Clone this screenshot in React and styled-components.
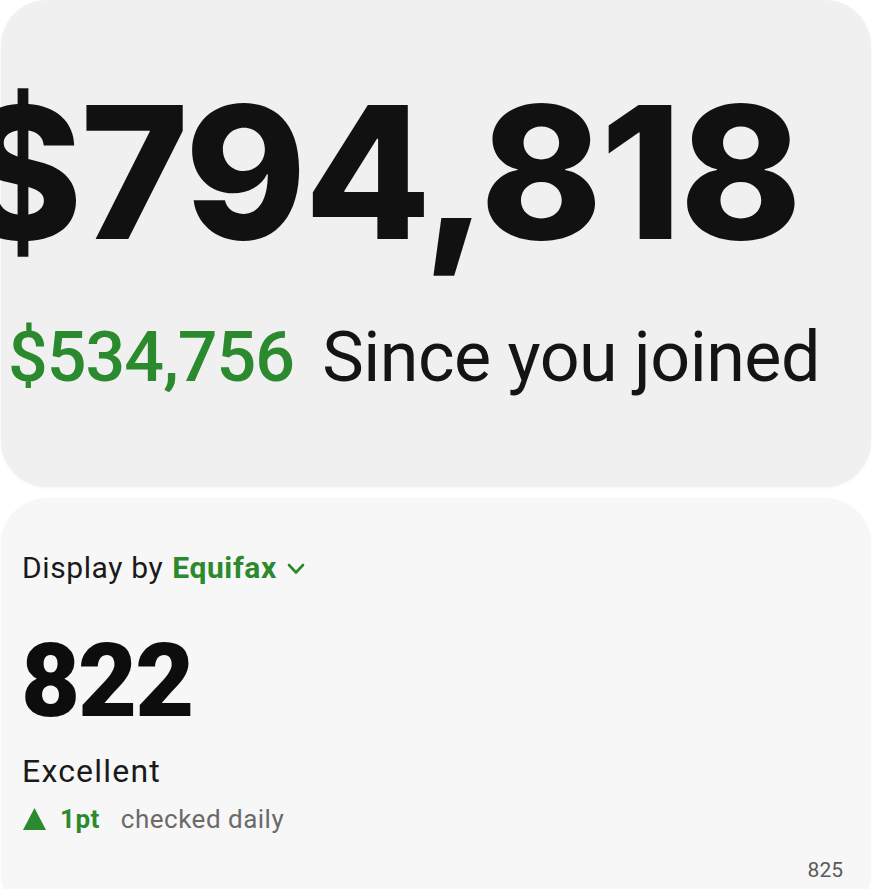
import React from 'react';
import styled, { createGlobalStyle } from 'styled-components';

const GlobalStyle = createGlobalStyle`
  html, body {
    margin: 0;
    padding: 0;
    background: #ffffff;
    overflow: hidden;
  }
  body {
    font-family: Roboto, 'Liberation Sans', Arial, sans-serif;
    color: #111111;
  }
`;

const GREEN = '#2b8a2e';

const Page = styled.div`
  width: 875px;
  height: 889px;
  display: flex;
  flex-direction: column;
  gap: 11px;
  padding: 0 4px 0 1px;
  box-sizing: border-box;
`;

const Card = styled.section`
  flex-shrink: 0;
  height: ${({ $height }) => $height}px;
  background: ${({ $bg }) => $bg};
  border-radius: 46px;
  box-shadow: 0 1px 3px rgba(0, 0, 0, 0.04);
  display: flex;
  flex-direction: column;
  padding: ${({ $pad }) => $pad};
  box-sizing: border-box;
`;

const Balance = styled.div`
  font-family: Inter, Roboto, sans-serif;
  font-size: 184px;
  line-height: 1;
  font-weight: 800;
  letter-spacing: -2px;
  margin-left: -40px;
  white-space: nowrap;
  color: #111111;
`;

const GainRow = styled.div`
  display: flex;
  align-items: baseline;
  gap: 28px;
  margin-top: 58px;
  margin-left: 7px;
  font-size: 70px;
  line-height: 1;
  white-space: nowrap;
`;

const Gain = styled.span`
  color: ${GREEN};
  font-weight: 500;
  letter-spacing: -1px;
`;

const GainLabel = styled.span`
  color: #141414;
  font-weight: 400;
  letter-spacing: -0.5px;
`;

const SourceRow = styled.div`
  display: flex;
  align-items: center;
  font-size: 30px;
  line-height: 1;
  margin-left: 21px;
  letter-spacing: 0.6px;
  white-space: nowrap;
`;

const SourceLabel = styled.span`
  color: #1a1a1a;
`;

const Bureau = styled.span`
  color: ${GREEN};
  font-weight: 700;
  margin-left: 9px;
`;

const Chevron = styled.svg`
  width: 18px;
  height: 12px;
  margin-left: 10px;
  margin-top: 2px;
`;

const Score = styled.div`
  font-size: 102px;
  line-height: 1;
  font-weight: 900;
  letter-spacing: -2px;
  margin-top: 47px;
  margin-left: 20px;
  color: #0d0d0d;
`;

const Rating = styled.div`
  font-size: 32px;
  line-height: 1;
  margin-top: 23px;
  margin-left: 21px;
  letter-spacing: 1.2px;
  color: #1a1a1a;
`;

const ChangeRow = styled.div`
  display: flex;
  align-items: center;
  font-size: 26px;
  line-height: 1;
  margin-top: 19px;
  margin-left: 22px;
  white-space: nowrap;
`;

const Triangle = styled.svg`
  width: 23px;
  height: 22px;
`;

const Delta = styled.span`
  color: ${GREEN};
  font-weight: 700;
  margin-left: 14px;
  letter-spacing: 0.5px;
`;

const Note = styled.span`
  color: #6a6a6a;
  margin-left: 21px;
  letter-spacing: 0.5px;
`;

const Footnote = styled.div`
  align-self: flex-end;
  font-size: 21px;
  line-height: 1;
  margin-top: 28px;
  margin-right: 28px;
  color: #5a5a5a;
`;

export default function App() {
  return (
    <>
      <GlobalStyle />
      <Page>
        <Card $height={487} $bg="#f0f0f0" $pad="80px 0 0 0">
          <Balance>$794,818</Balance>
          <GainRow>
            <Gain>$534,756</Gain>
            <GainLabel>Since you joined</GainLabel>
          </GainRow>
        </Card>
        <Card $height={420} $bg="#f7f7f7" $pad="55px 0 0 0">
          <SourceRow>
            <SourceLabel>Display by</SourceLabel>
            <Bureau>Equifax</Bureau>
            <Chevron viewBox="0 0 18 12">
              <polyline
                points="2,2 9,9.5 16,2"
                fill="none"
                stroke={GREEN}
                strokeWidth="2.6"
                strokeLinecap="round"
                strokeLinejoin="round"
              />
            </Chevron>
          </SourceRow>
          <Score>822</Score>
          <Rating>Excellent</Rating>
          <ChangeRow>
            <Triangle viewBox="0 0 23 22">
              <polygon points="11.5,0 23,22 0,22" fill={GREEN} />
            </Triangle>
            <Delta>1pt</Delta>
            <Note>checked daily</Note>
          </ChangeRow>
          <Footnote>825</Footnote>
        </Card>
      </Page>
    </>
  );
}
